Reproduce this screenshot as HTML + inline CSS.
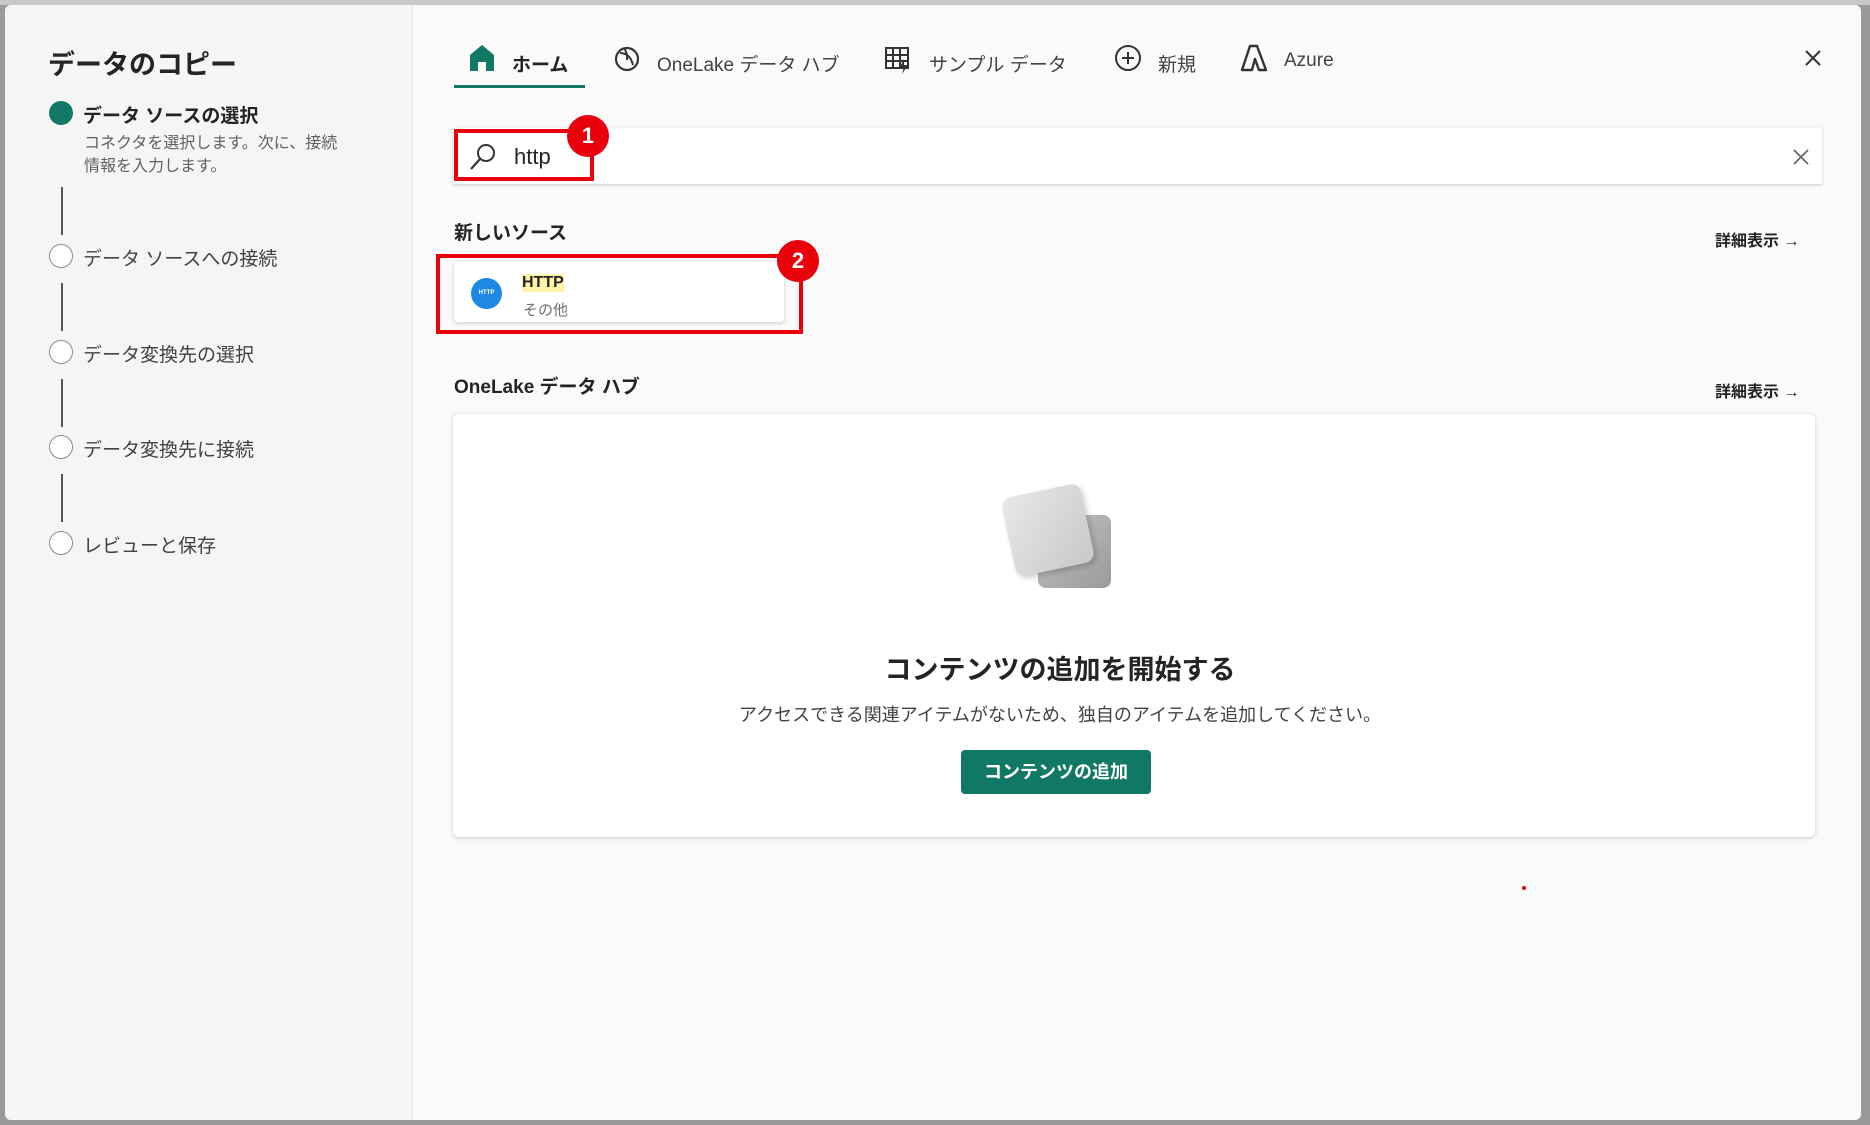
<!DOCTYPE html>
<html><head><meta charset="utf-8"><style>
*{margin:0;padding:0;box-sizing:border-box}
body{width:1870px;height:1125px;background:#9a9a9a;font-family:"Liberation Sans","Noto Sans CJK JP",sans-serif;position:relative;overflow:hidden;color:#242424}
.a{position:absolute}
#dlg{left:5px;top:5px;width:1856px;height:1115px;background:#fafafa;border-radius:6px;overflow:hidden}
#left{left:0;top:0;width:408px;height:100%;background:#f5f5f5;border-right:1px solid #e6e6e6}
.circ{width:24px;height:24px;border-radius:50%;border:1.5px solid #8a8a8a;background:#fff}
.st{font-size:19px;color:#424242}
.vl{width:2px;background:#555;height:48px;left:56px}
.tab{font-size:19px;color:#424242;top:45px}
.red{border:4px solid #e8000b}
.badge{width:42px;height:42px;border-radius:50%;background:#e8000b;color:#fff;font-weight:bold;font-size:22px;text-align:center;line-height:42px}
.more{font-size:16px;font-weight:bold}
</style></head><body>
<div class="a" style="left:0;top:0;width:1870px;height:5px;background:#c8c8c8"></div>
<div id="dlg" class="a">
<div id="left" class="a">
 <div class="a" style="left:43px;top:38px;font-size:27px;font-weight:bold">データのコピー</div>
 <div class="a" style="left:44px;top:96px;width:24px;height:24px;border-radius:50%;background:#117865"></div>
 <div class="a" style="left:78px;top:96px;font-size:19px;font-weight:bold">データ ソースの選択</div>
 <div class="a" style="left:79px;top:127px;font-size:16px;color:#616161;line-height:23px">コネクタを選択します。次に、接続<br>情報を入力します。</div>
 <div class="a vl" style="top:182px"></div>
 <div class="a circ" style="left:44px;top:239px"></div><div class="a st" style="left:78px;top:239px">データ ソースへの接続</div>
 <div class="a vl" style="top:278px"></div>
 <div class="a circ" style="left:44px;top:335px"></div><div class="a st" style="left:78px;top:335px">データ変換先の選択</div>
 <div class="a vl" style="top:374px"></div>
 <div class="a circ" style="left:44px;top:430px"></div><div class="a st" style="left:78px;top:430px">データ変換先に接続</div>
 <div class="a vl" style="top:469px"></div>
 <div class="a circ" style="left:44px;top:526px"></div><div class="a st" style="left:78px;top:526px">レビューと保存</div>
</div>
<svg class="a" style="left:463px;top:38px" width="28" height="30" viewBox="0 0 28 30"><path d="M14 2L2 12v16h8v-9h8v9h8V12z" fill="#117865"/></svg>
<div class="a tab" style="left:507px;color:#242424;font-weight:bold">ホーム</div>
<div class="a" style="left:449px;top:80px;width:131px;height:3px;background:#117865"></div>
<svg class="a" style="left:607px;top:38px" width="30" height="30" viewBox="0 0 30 30"><circle cx="15" cy="16" r="11" fill="none" stroke="#333" stroke-width="2.2"/><path d="M8 10q10 0 13 12M12 5q4 6 3 12" fill="none" stroke="#333" stroke-width="2"/></svg>
<div class="a tab" style="left:652px">OneLake データ ハブ</div>
<svg class="a" style="left:879px;top:40px" width="28" height="30" viewBox="0 0 28 30"><rect x="2" y="3" width="22" height="20" fill="none" stroke="#333" stroke-width="2"/><path d="M2 10h22M2 16h22M9 3v20M16 3v20" stroke="#333" stroke-width="2"/><path d="M20 14l-4 8h4l-2 7 6-9h-4z" fill="#333"/></svg>
<div class="a tab" style="left:924px">サンプル データ</div>
<svg class="a" style="left:1108px;top:38px" width="30" height="30" viewBox="0 0 30 30"><circle cx="15" cy="15" r="12" fill="none" stroke="#333" stroke-width="2"/><path d="M15 9v12M9 15h12" stroke="#333" stroke-width="2"/></svg>
<div class="a tab" style="left:1153px">新規</div>
<svg class="a" style="left:1234px;top:38px" width="30" height="30" viewBox="0 0 30 30"><path d="M11 3h7l9 24H20L16 16 13 27H3z" fill="none" stroke="#333" stroke-width="2.4" stroke-linejoin="round"/></svg>
<div class="a tab" style="left:1279px">Azure</div>
<svg class="a" style="left:1798px;top:43px" width="20" height="20"><path d="M3 3l14 14M17 3L3 17" stroke="#333" stroke-width="2"/></svg>
<div class="a" style="left:448px;top:123px;width:1369px;height:56px;background:#fff;box-shadow:0 1px 3px rgba(0,0,0,.2)"></div>
<svg class="a" style="left:463px;top:137px" width="30" height="30" viewBox="0 0 30 30"><circle cx="18" cy="11" r="8" fill="none" stroke="#333" stroke-width="2"/><path d="M12 17L3 27" stroke="#333" stroke-width="2.2"/></svg>
<div class="a" style="left:509px;top:139px;font-size:22px">http</div>
<svg class="a" style="left:1786px;top:142px" width="20" height="20"><path d="M3 3l14 14M17 3L3 17" stroke="#666" stroke-width="1.8"/></svg>
<div class="a red" style="left:449px;top:124px;width:140px;height:52px"></div>
<div class="a badge" style="left:562px;top:110px">1</div>
<div class="a" style="left:449px;top:213px;font-size:19px;font-weight:bold">新しいソース</div>
<div class="a more" style="left:1710px;top:222px">詳細表示 →</div>
<div class="a" style="left:449px;top:257px;width:330px;height:60px;background:#fff;border-radius:4px;box-shadow:0 1px 4px rgba(0,0,0,.2)"></div>
<div class="a" style="left:466px;top:273px;width:31px;height:31px;border-radius:50%;background:#1e88e5;color:#fff;font-size:6px;font-weight:bold;text-align:center;line-height:31px">HTTP</div>
<div class="a" style="left:517px;top:269px;font-size:16px;font-weight:bold;background:#fff3a8">HTTP</div>
<div class="a" style="left:518px;top:294px;font-size:15px;color:#707070">その他</div>
<div class="a red" style="left:431px;top:249px;width:367px;height:80px"></div>
<div class="a badge" style="left:772px;top:235px">2</div>
<div class="a" style="left:449px;top:367px;font-size:19px;font-weight:bold">OneLake データ ハブ</div>
<div class="a more" style="left:1710px;top:373px">詳細表示 →</div>
<div class="a" style="left:448px;top:409px;width:1362px;height:423px;background:#fff;border-radius:6px;box-shadow:0 1px 4px rgba(0,0,0,.2)"></div>
<div class="a" style="left:1033px;top:510px;width:73px;height:73px;border-radius:8px;background:linear-gradient(135deg,#c4c4c4,#9a9a9a)"></div>
<div class="a" style="left:1003px;top:485px;width:80px;height:80px;border-radius:10px;background:linear-gradient(135deg,#e8e8e8,#c8c8c8);transform:rotate(-12deg);box-shadow:2px 3px 6px rgba(0,0,0,.2)"></div>
<div class="a" style="left:555px;top:643px;width:1000px;text-align:center;font-size:27px;font-weight:bold">コンテンツの追加を開始する</div>
<div class="a" style="left:555px;top:696px;width:1000px;text-align:center;font-size:18px;color:#424242">アクセスできる関連アイテムがないため、独自のアイテムを追加してください。</div>
<div class="a" style="left:956px;top:745px;width:190px;height:44px;background:#117865;border-radius:4px;color:#fff;font-size:18px;font-weight:bold;text-align:center;line-height:44px">コンテンツの追加</div>
<div class="a" style="left:1517px;top:881px;width:4px;height:4px;border-radius:50%;background:#e8000b"></div>
</div>
</body></html>
